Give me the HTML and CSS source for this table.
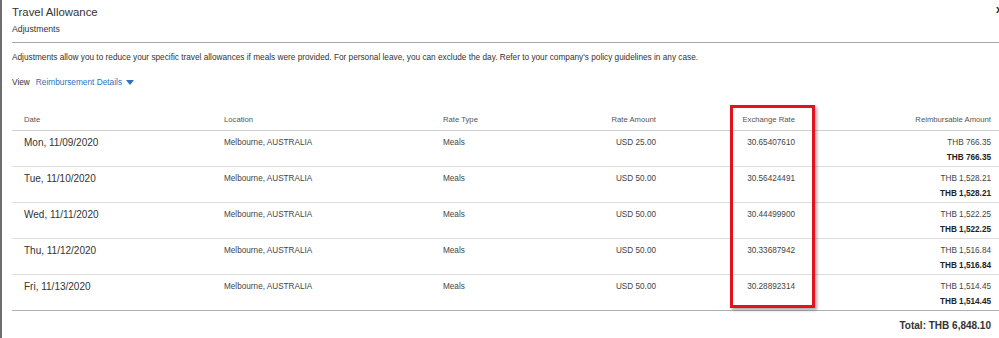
FILE: index.html
```html
<!DOCTYPE html>
<html>
<head>
<meta charset="utf-8">
<link rel="stylesheet" href="styles.css">
</head>
<body>
<div class="dialog">
  <div class="head">
    <div class="title">Travel Allowance</div>
    <div class="subtitle">Adjustments</div>
  </div>
  <span class="close">x</span>
  <p class="desc">Adjustments allow you to reduce your specific travel allowances if meals were provided. For personal leave, you can exclude the day. Refer to your company's policy guidelines in any case.</p>
  <div class="view">View <span class="link">Reimbursement Details</span><span class="caret"></span></div>
  <table class="grid">
    <colgroup>
      <col class="c1"><col class="c2"><col class="c3"><col class="c4"><col class="c5"><col class="c6">
    </colgroup>
    <thead>
      <tr><th>Date</th><th>Location</th><th>Rate Type</th><th class="r">Rate Amount</th><th class="r">Exchange Rate</th><th class="r last">Reimbursable Amount</th></tr>
    </thead>
    <tbody>
      <tr><td class="date">Mon, 11/09/2020</td><td>Melbourne, AUSTRALIA</td><td>Meals</td><td class="r">USD 25.00</td><td class="r">30.65407610</td><td class="r last"><div>THB 766.35</div><div class="b">THB 766.35</div></td></tr>
      <tr><td class="date">Tue, 11/10/2020</td><td>Melbourne, AUSTRALIA</td><td>Meals</td><td class="r">USD 50.00</td><td class="r">30.56424491</td><td class="r last"><div>THB 1,528.21</div><div class="b">THB 1,528.21</div></td></tr>
      <tr><td class="date">Wed, 11/11/2020</td><td>Melbourne, AUSTRALIA</td><td>Meals</td><td class="r">USD 50.00</td><td class="r">30.44499900</td><td class="r last"><div>THB 1,522.25</div><div class="b">THB 1,522.25</div></td></tr>
      <tr><td class="date">Thu, 11/12/2020</td><td>Melbourne, AUSTRALIA</td><td>Meals</td><td class="r">USD 50.00</td><td class="r">30.33687942</td><td class="r last"><div>THB 1,516.84</div><div class="b">THB 1,516.84</div></td></tr>
      <tr class="end"><td class="date">Fri, 11/13/2020</td><td>Melbourne, AUSTRALIA</td><td>Meals</td><td class="r">USD 50.00</td><td class="r">30.28892314</td><td class="r last"><div>THB 1,514.45</div><div class="b">THB 1,514.45</div></td></tr>
    </tbody>
  </table>
  <div class="total">Total: THB 6,848.10</div>
  <div class="highlight"></div>
</div>
</body>
</html>
```

FILE: styles.css
```css
html, body {
  margin: 0;
  padding: 0;
  background: #fff;
  overflow: hidden;
}
body {
  width: 999px;
  height: 338px;
  font-family: "Liberation Sans", Arial, sans-serif;
  color: #333;
}
.dialog {
  position: relative;
  box-sizing: border-box;
  width: 999px;
  height: 338px;
  border-left: 2px solid #6e6e6e;
  padding-left: 10px;
}
.head {
  padding-top: 5px;
  padding-bottom: 7px;
  border-bottom: 1px solid #a8a8a8;
}
.title {
  font-size: 11.4px;
  line-height: 14px;
  color: #333;
}
.subtitle {
  margin-top: 4px;
  font-size: 8.7px;
  line-height: 12px;
  color: #333;
}
.close {
  position: absolute;
  left: 994px;
  top: 3px;
  font-size: 11px;
  font-weight: bold;
  line-height: 12px;
  color: #222;
}
.desc {
  margin: 9px 0 0;
  font-size: 8.26px;
  line-height: 12px;
  color: #333;
}
.view {
  margin-top: 12px;
  font-size: 8.3px;
  line-height: 12px;
  color: #333;
  display: flex;
  align-items: center;
}
.link {
  margin-left: 6px;
  color: #2f72b8;
}
.caret {
  margin-left: 4px;
  width: 0;
  height: 0;
  border-left: 4px solid transparent;
  border-right: 4px solid transparent;
  border-top: 5px solid #2f72b8;
}
.grid {
  margin-top: 26px;
  width: 987px;
  table-layout: fixed;
  border-collapse: separate;
  border-spacing: 0;
}
.c1 { width: 200px; }
.c2 { width: 219px; }
.c3 { width: 140px; }
.c4 { width: 97px; }
.c5 { width: 139px; }
.c6 { width: 192px; }
.grid th {
  text-align: left;
  font-weight: normal;
  font-size: 7.7px;
  line-height: 12px;
  color: #555;
  padding: 0 12px 4px;
  vertical-align: bottom;
  white-space: nowrap;
  border-bottom: 1px solid #cfcfcf;
}
.grid td {
  height: 29px;
  padding: 6px 12px 0;
  vertical-align: top;
  font-size: 8.2px;
  line-height: 12px;
  color: #444;
  white-space: nowrap;
  border-bottom: 1px solid #dcdcdc;
}
.grid tr.end td {
  border-bottom-color: #b0b0b0;
}
.grid td.date {
  font-size: 10px;
  color: #333;
}
.grid .r {
  text-align: right;
}
.grid .last {
  padding-right: 8px;
}
.grid .b {
  margin-top: 3px;
  font-weight: bold;
  color: #222;
}
.total {
  margin-top: 9px;
  padding-right: 8px;
  text-align: right;
  font-size: 10px;
  line-height: 12px;
  font-weight: bold;
  color: #333;
}
.highlight {
  position: absolute;
  left: 728px;
  top: 105px;
  width: 85px;
  height: 203px;
  box-sizing: border-box;
  border: 3px solid #e3131d;
  box-shadow: 2px 2px 3px rgba(0, 0, 0, 0.35);
}
```
